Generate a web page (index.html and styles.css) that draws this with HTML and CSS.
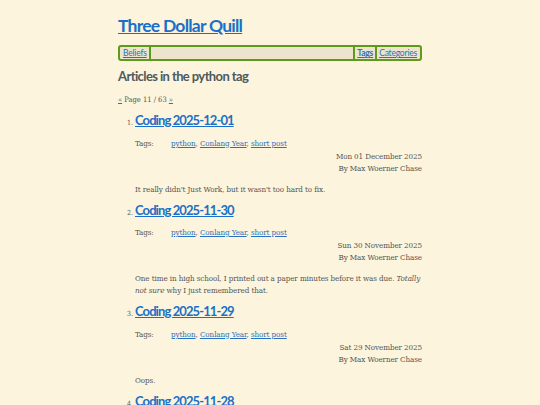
FILE: index.html
```html
<!DOCTYPE html>
<html>
<head>
<meta charset="utf-8">
<link rel="stylesheet" href="styles.css">
</head>
<body>
<div class="page">
  <h1 class="site-title"><a href="#">Three Dollar Quill</a></h1>
  <nav class="nav">
    <span class="nav-item nav-left"><a href="#">Beliefs</a></span>
    <span class="nav-fill"></span>
    <span class="nav-item nav-tags"><a href="#">Tags</a></span>
    <span class="nav-item nav-cats"><a href="#">Categories</a></span>
  </nav>
  <h2 class="section-title">Articles in the python tag</h2>
  <p class="pager"><a href="#">«</a> Page 11 / 63 <a href="#">»</a></p>
  <ol class="articles" start="1">
    <li class="article">
      <h3 class="article-title"><a href="#">Coding 2025-12-01</a></h3>
      <div class="tag-line"><span class="tags-label">Tags:</span><span><a href="#">python</a>, <a href="#">Conlang Year</a>, <a href="#">short post</a></span></div>
      <div class="meta meta-date">Mon 01 December 2025</div>
      <div class="meta">By Max Woerner Chase</div>
      <p class="summary">It really didn't Just Work, but it wasn't too hard to fix.</p>
    </li>
    <li class="article">
      <h3 class="article-title"><a href="#">Coding 2025-11-30</a></h3>
      <div class="tag-line"><span class="tags-label">Tags:</span><span><a href="#">python</a>, <a href="#">Conlang Year</a>, <a href="#">short post</a></span></div>
      <div class="meta meta-date">Sun 30 November 2025</div>
      <div class="meta">By Max Woerner Chase</div>
      <p class="summary">One time in high school, I printed out a paper minutes before it was due. <em>Totally not sure</em> why I just remembered that.</p>
    </li>
    <li class="article">
      <h3 class="article-title"><a href="#">Coding 2025-11-29</a></h3>
      <div class="tag-line"><span class="tags-label">Tags:</span><span><a href="#">python</a>, <a href="#">Conlang Year</a>, <a href="#">short post</a></span></div>
      <div class="meta meta-date">Sat 29 November 2025</div>
      <div class="meta">By Max Woerner Chase</div>
      <p class="summary">Oops.</p>
    </li>
    <li class="article">
      <h3 class="article-title"><a href="#">Coding 2025-11-28</a></h3>
    </li>
  </ol>
</div>
</body>
</html>
```
FILE: styles.css
```css
html, body {
  margin: 0;
  padding: 0;
  background: #fcf4dc;
}
body {
  font-family: "DejaVu Serif Condensed", "DejaVu Serif", serif;
  font-stretch: condensed;
  font-size: 8px;
  color: #555;
  height: 405px;
  overflow: hidden;
}
a { color: #2a72c0; }
.page {
  width: 304px;
  margin: 0 auto;
}
.site-title {
  font-family: Lato, sans-serif;
  font-stretch: normal;
  font-size: 17.5px;
  letter-spacing: -0.75px;
  font-weight: 700;
  margin: 14px 0 7px;
  line-height: 24px;
}
.site-title a { color: #1a70c8; }
.nav {
  display: flex;
  align-items: stretch;
  border: 2px solid #5e9a1e;
  border-radius: 3px;
  background: #ece4cc;
  height: 12px;
  font-family: Lato, sans-serif;
  font-stretch: normal;
  font-size: 8.5px;
  letter-spacing: -0.2px;
  padding: 0 1px;
}
.nav-item {
  display: flex;
  align-items: center;
  padding: 0 2px;
  white-space: nowrap;
}
.nav-item a { color: #2a72c0; }
.nav-left { border-right: 2px solid #5e9a1e; }
.nav-fill { flex: 1; }
.nav-tags { border-left: 2px solid #5e9a1e; border-right: 2px solid #5e9a1e; font-weight: 700; }
.section-title {
  font-family: Lato, sans-serif;
  font-stretch: normal;
  font-size: 13px;
  letter-spacing: -0.6px;
  font-weight: 700;
  color: #4e5a60;
  margin: 6px 0 0;
  line-height: 18px;
}
.pager {
  margin: 10px 0 0;
  font-size: 7.5px;
  line-height: 10px;
}
.articles {
  margin: 6px 0 0;
  padding-left: 17px;
}
.article { font-size: 7px; color: #555; }
.article-title {
  font-family: Lato, sans-serif;
  font-stretch: normal;
  font-size: 13px;
  letter-spacing: -0.9px;
  font-weight: 700;
  margin: 0;
  line-height: 18px;
  display: inline-block;
}
.article-title a { color: #1a70c8; }
.tag-line {
  display: flex;
  font-size: 8px;
  letter-spacing: -0.1px;
  line-height: 13px;
  margin-top: 7.5px;
}
.tags-label { width: 36px; }
.meta {
  text-align: right;
  font-size: 8px;
  letter-spacing: -0.1px;
  line-height: 12px;
}
.meta-date { margin-top: 1px; }
.summary {
  font-size: 8px;
  letter-spacing: -0.1px;
  line-height: 12px;
  margin: 9px 0 5px;
}
.summary em { line-height: 1; }
```
